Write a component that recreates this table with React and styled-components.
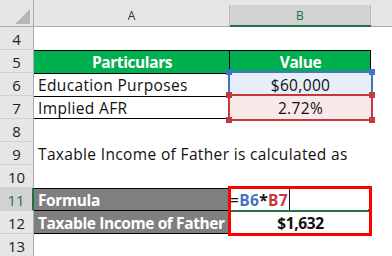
import React from 'react';
import styled, { createGlobalStyle } from 'styled-components';

const GlobalStyle = createGlobalStyle`
  html, body {
    margin: 0;
    padding: 0;
    background: #ffffff;
  }
  * {
    box-sizing: border-box;
  }
`;

const Sheet = styled.div`
  display: grid;
  grid-template-columns: 34px 196px 141px 1fr;
  grid-template-rows: 27px repeat(10, 23px);
  width: 392px;
  height: 256px;
  overflow: hidden;
  background: #ffffff;
  font-family: "Open Sans", "Noto Sans", sans-serif;
  font-size: 15.5px;
  color: #111;
`;

/* header row */
const Corner = styled.div`
  background: #e6e6e6;
  border-right: 1px solid #ababab;
  border-bottom: 1px solid #ababab;
  display: flex;
  align-items: flex-end;
  justify-content: flex-end;
  padding: 0 3px 2px 0;
`;

const ColHead = styled.div`
  background: #e6e6e6;
  border-bottom: ${(p) => (p.$active ? '2px solid #217346' : '1px solid #ababab')};
  display: flex;
  padding-top: 5px;
`;

const ColLabel = styled.div`
  flex: 1;
  display: flex;
  align-items: center;
  justify-content: center;
  font-size: 12px;
  color: ${(p) => (p.$active ? '#217346' : '#333')};
  background: ${(p) => (p.$active ? '#d2d2d2' : 'transparent')};
  border-right: ${(p) => (p.$last ? 'none' : '1px solid #bcbcbc')};
`;

/* row numbers */
const RowHead = styled.div`
  background: ${(p) => (p.$active ? '#d2d2d2' : '#e6e6e6')};
  color: ${(p) => (p.$active ? '#217346' : '#222')};
  border-right: ${(p) => (p.$active ? '2px solid #217346' : '1px solid #ababab')};
  border-bottom: 1px solid #d0d0d0;
  display: flex;
  align-items: center;
  justify-content: center;
  padding-top: 1px;
  font-size: 15px;
`;

const lines = (p) => {
  const s = [];
  if (p.$top) s.push('inset 0 1px 0 #000');
  if (p.$bottom) s.push('inset 0 -1px 0 #000');
  if (p.$right) s.push('inset -1px 0 0 #000');
  return s.length ? s.join(', ') : 'none';
};

const Cell = styled.div`
  position: relative;
  display: flex;
  align-items: center;
  justify-content: ${(p) => (p.$center ? 'center' : 'flex-start')};
  padding: 1px 4px 0;
  white-space: nowrap;
  overflow: visible;
  background: ${(p) => p.$bg || 'transparent'};
  color: ${(p) => p.$color || '#111'};
  font-weight: ${(p) => (p.$bold ? 700 : 400)};
  letter-spacing: ${(p) => (p.$bold ? '-0.4px' : '0.35px')};
  box-shadow: ${lines};
  z-index: ${(p) => (p.$bg ? 0 : 1)};
  ${(p) => (p.$row ? `grid-column: 3; grid-row: ${p.$row};` : '')}
`;

const RefCell = styled(Cell)`
  outline: 2px solid ${(p) => p.$ref};
  outline-offset: 0;
  z-index: ${(p) => p.$layer};
`;

const Handle = styled.span`
  position: absolute;
  width: 6px;
  height: 6px;
  background: ${(p) => p.$ref};
  ${(p) => (p.$y === 'top' ? 'top: -4px;' : 'bottom: -4px;')}
  ${(p) => (p.$x === 'left' ? 'left: -4px;' : 'right: -4px;')}
`;

const FormulaCell = styled(Cell)`
  padding-left: 0;
  font-weight: 700;
`;

const Token = styled.span`
  color: ${(p) => p.$color || '#111'};
  font-weight: ${(p) => (p.$thin ? 400 : 700)};
`;

const Caret = styled.span`
  align-self: stretch;
  width: 1px;
  margin-left: 1px;
  background: #111;
`;

const ActiveLine = styled.span`
  position: absolute;
  left: 0;
  right: 3px;
  bottom: -1px;
  height: 2px;
  background: #217346;
  &::after {
    content: '';
    position: absolute;
    right: -3px;
    top: -1px;
    width: 3px;
    height: 3px;
    background: #217346;
  }
`;

const Highlight = styled.div`
  grid-column: 3;
  grid-row: 9 / span 2;
  margin: -2px -1px -2px -2px;
  border: 3px solid #ff0000;
  pointer-events: none;
  z-index: 3;
`;

const Empty = () => <Cell />;

export default function App() {
  return (
    <>
      <GlobalStyle />
      <Sheet>
        <Corner>
          <svg width="15" height="15" viewBox="0 0 15 15">
            <polygon points="15,0 15,15 0,15" fill="#b6b6b6" />
          </svg>
        </Corner>
        <ColHead>
          <ColLabel>A</ColLabel>
        </ColHead>
        <ColHead $active>
          <ColLabel $active>B</ColLabel>
        </ColHead>
        <ColHead>
          <ColLabel $last />
        </ColHead>

        {/* row 4 */}
        <RowHead>4</RowHead>
        <Empty />
        <Empty />
        <Empty />

        {/* row 5 */}
        <RowHead>5</RowHead>
        <Cell $bg="#00b050" $color="#fff" $bold $center $top $right>Particulars</Cell>
        <Cell $bg="#00b050" $color="#fff" $bold $center $top $right>Value</Cell>
        <Empty />

        {/* row 6 */}
        <RowHead>6</RowHead>
        <Cell $top>Education Purposes</Cell>
        <RefCell $bg="#e8eef8" $ref="#4472c4" $layer={2} $center>
          $60,000
          <Handle $ref="#4472c4" $x="left" $y="top" />
          <Handle $ref="#4472c4" $x="right" $y="top" />
        </RefCell>
        <Empty />

        {/* row 7 */}
        <RowHead>7</RowHead>
        <Cell $top $bottom>Implied AFR</Cell>
        <RefCell $bg="#f8e9e9" $ref="#c3393f" $layer={3} $center>
          2.72%
          <Handle $ref="#c3393f" $x="left" $y="top" />
          <Handle $ref="#c3393f" $x="right" $y="top" />
          <Handle $ref="#c3393f" $x="left" $y="bottom" />
          <Handle $ref="#c3393f" $x="right" $y="bottom" />
        </RefCell>
        <Empty />

        {/* row 8 */}
        <RowHead>8</RowHead>
        <Empty />
        <Empty />
        <Empty />

        {/* row 9 */}
        <RowHead>9</RowHead>
        <Cell>Taxable Income of Father is calculated as</Cell>
        <Empty />
        <Empty />

        {/* row 10 */}
        <RowHead>10</RowHead>
        <Empty />
        <Empty />
        <Empty />

        {/* row 11 */}
        <RowHead $active>11</RowHead>
        <Cell $bg="#7f7f7f" $color="#fff" $bold $top $bottom>Formula</Cell>
        <FormulaCell $row={9}>
          <Token $thin>=</Token>
          <Token $color="#4472c4">B6</Token>
          <Token>*</Token>
          <Token $color="#c3393f">B7</Token>
          <Caret />
          <ActiveLine />
        </FormulaCell>
        <Empty />

        {/* row 12 */}
        <RowHead>12</RowHead>
        <Cell $bg="#7f7f7f" $color="#fff" $bold $bottom>Taxable Income of Father</Cell>
        <Cell $row={10} $bold $center>$1,632</Cell>
        <Empty />

        {/* row 13 */}
        <RowHead>13</RowHead>
        <Empty />
        <Empty />
        <Empty />

        <Highlight />
      </Sheet>
    </>
  );
}
